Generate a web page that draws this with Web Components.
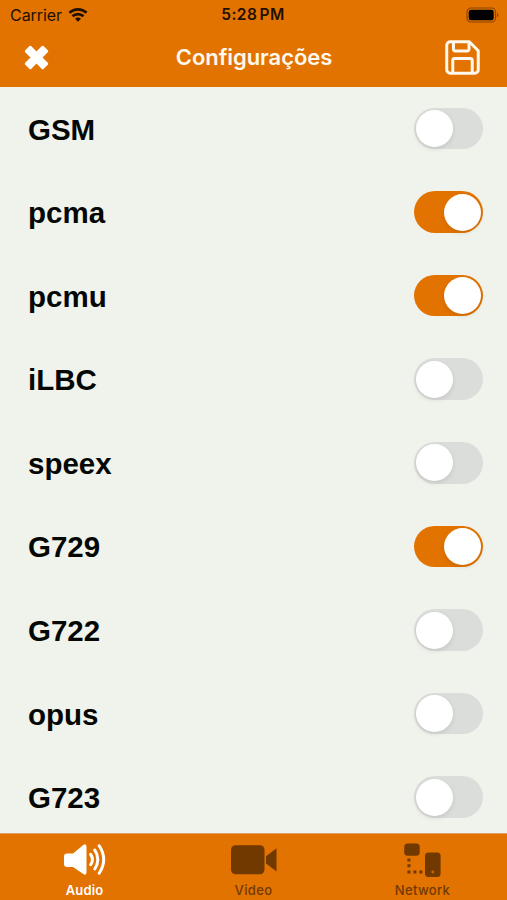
<!DOCTYPE html>
<html lang="pt">
<head>
<meta charset="utf-8">
<meta name="viewport" content="width=device-width, initial-scale=1">
<title>Configurações</title>
<style>
    body {
        margin: 0;
        --accent: #e27300;
        --page: #eff3ec;
        background: var(--page);
        font-family: Inter, "Liberation Sans", sans-serif;
    }
</style>
</head>
<body>
<settings-screen></settings-screen>

<script>
class StatusBar extends HTMLElement {
    connectedCallback() {
        this.attachShadow({ mode: 'open' });
        this.shadowRoot.innerHTML = `
            <style>
                :host {
                    display: grid;
                    grid-template-columns: 1fr auto 1fr;
                    align-items: center;
                    height: 29px;
                    padding: 0 8px 0 10px;
                    box-sizing: border-box;
                    color: #211000;
                }
                .carrier {
                    display: flex;
                    align-items: center;
                    gap: 6px;
                    font-size: 16px;
                    letter-spacing: -0.05px;
                }
                .time {
                    padding-right: 3px;
                    font-size: 15.5px;
                    font-weight: 600;
                    letter-spacing: 0.4px;
                    word-spacing: -2px;
                }
                .battery { justify-self: end; }
                svg { display: block; }
            </style>
            <div class="carrier">
                <span>Carrier</span>
                <svg width="20" height="14" viewBox="0 0 21 15" fill="none" stroke="currentColor" stroke-width="2.9">
                    <path d="M1.3 5.2c5.2-4.9 13.2-4.9 18.4 0M4.6 8.9c3.3-3.1 8.5-3.1 11.8 0"/>
                    <path d="M10.5 14.7L7.3 11.5c1.8-1.6 4.6-1.6 6.4 0z" fill="currentColor" stroke="none"/>
                </svg>
            </div>
            <div class="time">5:28 PM</div>
            <svg class="battery" width="33" height="16" viewBox="0 0 33 16">
                <rect x="1" y="1" width="28.5" height="14" rx="4" fill="none" stroke="#8a4600" stroke-width="1.2"/>
                <rect x="2.7" y="2.7" width="25" height="10.6" rx="2.4" fill="#000"/>
                <path d="M31 5.7c1.8.8 1.8 3.8 0 4.6z" fill="#8a4600"/>
            </svg>
        `;
    }
}

class NavHeader extends HTMLElement {
    connectedCallback() {
        this.attachShadow({ mode: 'open' });
        this.shadowRoot.innerHTML = `
            <style>
                :host {
                    display: grid;
                    grid-template-columns: 1fr auto 1fr;
                    align-items: center;
                    height: 58px;
                    padding: 0 27px 2px 24px;
                    box-sizing: border-box;
                    color: #fff8ee;
                }
                h1 {
                    margin: 0;
                    padding-left: 4px;
                    font-size: 22px;
                    font-weight: 600;
                    letter-spacing: -0.05px;
                }
                button {
                    display: block;
                    padding: 0;
                    border: 0;
                    background: none;
                    color: inherit;
                }
                .save { justify-self: end; }
                svg { display: block; }
            </style>
            <button aria-label="Fechar">
                <svg width="25" height="25" viewBox="0 0 25 25" fill="#fff" stroke="#fff" stroke-width="3" stroke-linejoin="round">
                    <path d="M6.3 2.3L12.5 8.5L18.7 2.3L22.7 6.3L16.5 12.5L22.7 18.7L18.7 22.7L12.5 16.5L6.3 22.7L2.3 18.7L8.5 12.5L2.3 6.3z"/>
                </svg>
            </button>
            <h1><slot></slot></h1>
            <button class="save" aria-label="Salvar">
                <svg width="35" height="35" viewBox="0 0 36 36" fill="none" stroke="currentColor" stroke-width="3.1" stroke-linejoin="round">
                    <path d="M5.5 1.8H25L34.2 11V30.5a3.7 3.7 0 0 1-3.7 3.7h-25a3.7 3.7 0 0 1-3.7-3.7v-25a3.7 3.7 0 0 1 3.7-3.7z"/>
                    <path d="M8.7 2v7.2a2 2 0 0 0 2 2h12a2 2 0 0 0 2-2V2M8 34V21a2 2 0 0 1 2-2h16a2 2 0 0 1 2 2v13"/>
                </svg>
            </button>
        `;
    }
}

class ToggleSwitch extends HTMLElement {
    connectedCallback() {
        this.attachShadow({ mode: 'open' });
        this.shadowRoot.innerHTML = `
            <style>
                :host {
                    display: flex;
                    width: 69px;
                    height: 41.6px;
                    padding: 2.3px;
                    box-sizing: border-box;
                    border-radius: 21px;
                    background: #daddda;
                }
                :host([on]) {
                    justify-content: flex-end;
                    background: var(--accent);
                }
                .knob {
                    width: 37px;
                    height: 37px;
                    border-radius: 50%;
                    background: #fff;
                    box-shadow: 0 2px 5px rgba(0, 0, 0, 0.1);
                }
            </style>
            <div class="knob"></div>
        `;
        this.setAttribute('role', 'switch');
        this.setAttribute('aria-checked', this.hasAttribute('on'));
    }
}

class CodecRow extends HTMLElement {
    connectedCallback() {
        const on = this.hasAttribute('on') ? 'on' : '';
        this.attachShadow({ mode: 'open' });
        this.shadowRoot.innerHTML = `
            <style>
                :host {
                    display: flex;
                    align-items: center;
                    justify-content: space-between;
                    height: 83.6px;
                    flex: none;
                    padding: 0 24px 0.6px 28px;
                    box-sizing: border-box;
                    color: #050705;
                    font: bold 29.5px "Liberation Sans", Arial, sans-serif;
                }
                span { padding-top: 2px; }
            </style>
            <span><slot></slot></span>
            <toggle-switch ${on}></toggle-switch>
        `;
    }
}

const tabIcons = {
    audio: `
        <path d="M5 10.5h6L21 2.2Q24.5 -.2 24.5 4V29Q24.5 33.2 21 30.8L11 24H5Q2 24 2 21V13.5Q2 10.5 5 10.5z"/>
        <path d="M28.7 11.3q3.5 5.2 0 10.4M32.8 7q6 9.5 0 19M37.2 2.8q9 13.7 0 27.4" fill="none" stroke="currentColor" stroke-width="3" stroke-linecap="round"/>`,
    video: `
        <rect x="0" y="2.3" width="33.5" height="29" rx="4.5"/>
        <path d="M35 13.2L45.5 5.2V28.4L35 20.5z"/>`,
    network: `
        <rect x="4.2" y=".5" width="15.5" height="12.3" rx="3.5"/>
        <rect x="25" y="9.6" width="15.6" height="24.5" rx="3.5"/>
        <path d="M7.4 15.4h3v3h-3zM7.4 21.2h3v3h-3zM7.4 27.5h3v3h-3zM13.4 27.5h3v3h-3zM19.4 27.5h3v3h-3z"/>
        <circle cx="32.8" cy="29" r="1.4" fill="#c96600"/>`
};

class TabItem extends HTMLElement {
    connectedCallback() {
        this.attachShadow({ mode: 'open' });
        this.shadowRoot.innerHTML = `
            <style>
                :host {
                    display: flex;
                    flex-direction: column;
                    align-items: center;
                    flex: 1;
                    gap: 4px;
                    padding-top: 9px;
                    color: #713900;
                    font-size: 13px;
                    line-height: 16px;
                    font-weight: 500;
                    letter-spacing: 0.35px;
                }
                :host([active]) {
                    color: #fff;
                    font-weight: 600;
                    letter-spacing: 0.15px;
                }
                svg { display: block; }
            </style>
            <svg width="46" height="35" viewBox="0 0 46 35" fill="currentColor">${tabIcons[this.getAttribute('icon')]}</svg>
            <span><slot></slot></span>
        `;
    }
}

class SettingsScreen extends HTMLElement {
    connectedCallback() {
        this.attachShadow({ mode: 'open' });
        this.shadowRoot.innerHTML = `
            <style>
                :host {
                    display: flex;
                    flex-direction: column;
                    height: 100vh;
                    overflow: hidden;
                }
                header, nav {
                    flex: none;
                    background: var(--accent);
                }
                main {
                    display: flex;
                    flex-direction: column;
                    flex: 1;
                    min-height: 0;
                    overflow: hidden;
                }
                nav {
                    display: flex;
                    height: 67px;
                    box-sizing: border-box;
                    border-top: 1px solid #d9a265;
                }
            </style>
            <header>
                <status-bar></status-bar>
                <nav-header>Configurações</nav-header>
            </header>
            <main>
                <codec-row>GSM</codec-row>
                <codec-row on>pcma</codec-row>
                <codec-row on>pcmu</codec-row>
                <codec-row>iLBC</codec-row>
                <codec-row>speex</codec-row>
                <codec-row on>G729</codec-row>
                <codec-row>G722</codec-row>
                <codec-row>opus</codec-row>
                <codec-row>G723</codec-row>
            </main>
            <nav>
                <tab-item icon="audio" active>Audio</tab-item>
                <tab-item icon="video">Video</tab-item>
                <tab-item icon="network">Network</tab-item>
            </nav>
        `;
    }
}

customElements.define('status-bar', StatusBar);
customElements.define('nav-header', NavHeader);
customElements.define('toggle-switch', ToggleSwitch);
customElements.define('codec-row', CodecRow);
customElements.define('tab-item', TabItem);
customElements.define('settings-screen', SettingsScreen);
</script>
</body>
</html>
